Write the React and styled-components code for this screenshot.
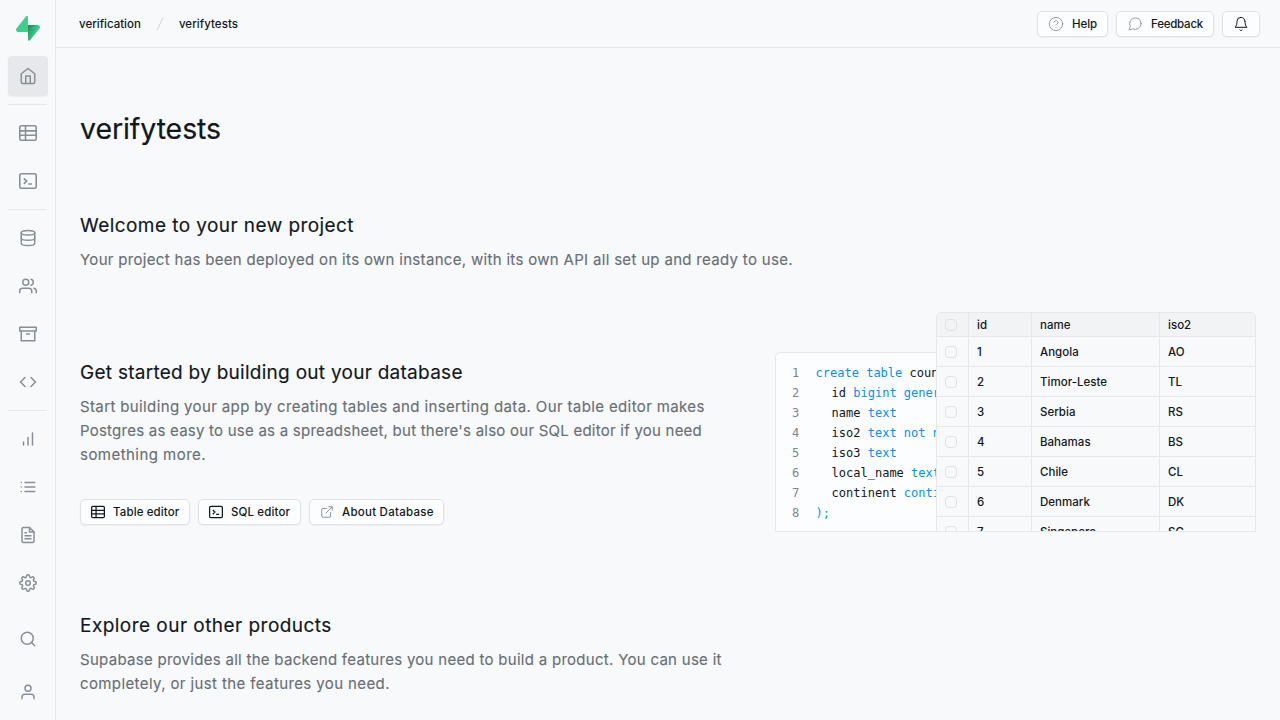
import React from 'react';
import styled, { createGlobalStyle, css } from 'styled-components';
import {
  FiHome, FiDatabase, FiUsers, FiArchive, FiCode, FiBarChart, FiList, FiFileText,
  FiSettings, FiSearch, FiUser, FiHelpCircle, FiMessageCircle, FiBell, FiExternalLink,
} from 'react-icons/fi';

const Global = createGlobalStyle`
  *, *::before, *::after { box-sizing: border-box; }
  body {
    margin: 0;
    background: #f8f9fb;
    color: #11181c;
    font-family: Inter, "Liberation Sans", sans-serif;
    font-weight: 450;
    overflow: hidden;
  }
  h1, h2, p { margin: 0; font-weight: 400; }
  svg { display: block; flex: none; }
`;

const Shell = styled.div`
  display: flex;
  width: 1280px;
  height: 720px;
  overflow: hidden;
`;

const Sidebar = styled.nav`
  width: 56px;
  flex: none;
  display: flex;
  flex-direction: column;
  justify-content: space-between;
  padding: 15px 7px 8px 8px;
  border-right: 1px solid #e6e8eb;
`;

const NavGroup = styled.div`
  display: flex;
  flex-direction: column;
  gap: 8px;
`;

const LogoBox = styled.div`
  display: flex;
  justify-content: center;
  height: 33px;
  padding-top: 0.5px;
`;

const NavItem = styled.a`
  width: 40px;
  height: 40px;
  display: flex;
  align-items: center;
  justify-content: center;
  border-radius: 4px;
  color: #889096;
  margin-top: ${(p) => p.$top || 0}px;
  ${(p) => p.$active && css`
    background: #e6e8eb;
    box-shadow: 0 1px 2px rgba(0, 0, 0, 0.06);
  `}
`;

const Separator = styled.div`
  height: 1px;
  width: 39px;
  background: #e6e8eb;
`;

const Page = styled.div`
  flex: 1;
  min-width: 0;
  display: flex;
  flex-direction: column;
`;

const Header = styled.header`
  height: 48px;
  flex: none;
  display: flex;
  align-items: center;
  justify-content: space-between;
  padding: 0 20px 0 23px;
  border-bottom: 1px solid #e6e8eb;
`;

const Crumbs = styled.div`
  display: flex;
  align-items: center;
  font-size: 11.5px;
  line-height: 16px;
`;

const Slash = styled.svg`
  margin: 0 12px;
`;

const Text = styled.span`
  white-space: nowrap;
  letter-spacing: ${(p) => p.$ls || 0}px;
`;

const Line = styled(Text)`
  display: block;
`;

const Actions = styled.div`
  display: flex;
  gap: 8px;
`;

const Button = styled.button`
  display: flex;
  align-items: center;
  gap: 8px;
  width: ${(p) => p.$w}px;
  height: 26px;
  padding: 0 0 0 10px;
  border: 1px solid #dfe3e6;
  border-radius: 5px;
  background: #fcfdfe;
  box-shadow: 0 1px 2px rgba(0, 0, 0, 0.05);
  color: #11181c;
  font: 450 11.5px/16px Inter, "Liberation Sans", sans-serif;
`;

const Muted = styled.span`
  color: #7e868c;
`;

const Content = styled.main`
  padding: 63px 24px 0;
`;

const Title = styled.h1`
  font-size: 28.5px;
  line-height: 36px;
  margin-bottom: 64px;
  -webkit-text-stroke: 0.2px currentColor;
`;

const Heading = styled.h2`
  padding-top: 1px;
  font-size: 19px;
  line-height: 28px;
  margin-bottom: 8px;
  -webkit-text-stroke: 0.15px currentColor;
`;

const Lead = styled.p`
  font-size: 15px;
  line-height: 24px;
  color: #687076;
  -webkit-text-stroke: 0.15px currentColor;
`;

const Feature = styled.section`
  display: flex;
  justify-content: space-between;
  height: 220px;
  margin: 40px 0 79px;
`;

const FeatureCopy = styled.div`
  padding-top: 46px;

  ${Actions} { margin-top: 32px; }
`;

const Preview = styled.div`
  width: 481px;
  display: flex;
  align-items: flex-end;
`;

const CodeCard = styled.div`
  width: 162px;
  height: 180px;
  flex: none;
  margin-right: -1px;
  padding: 10px 0 0 16px;
  border: 1px solid #e6e8eb;
  border-radius: 5px 0 0 0;
  background: #fcfdfe;
  overflow: hidden;
  font: 400 12px/20px "DejaVu Sans Mono", monospace;
`;

const CodeLine = styled.div`
  display: flex;
  white-space: pre;
`;

const LineNo = styled.span`
  flex: none;
  width: 23.6px;
  color: #7e868c;
`;

const Code = styled.span`
  padding-left: ${(p) => (p.$indent ? 16 : 0)}px;
`;

const Keyword = styled.span`
  color: #0091ff;
`;

const Grid = styled.div`
  position: relative;
  width: 320px;
  height: 220px;
  flex: none;
  border: 1px solid #e6e8eb;
  border-radius: 5px 5px 0 0;
  background: #f8f9fb;
  overflow: hidden;
  font-size: 11.5px;
`;

const Row = styled.div`
  display: grid;
  grid-template-columns: 32px 63px 128px 95px;
  height: ${(p) => (p.$head ? 24 : 30)}px;
  border-bottom: 1px solid #e6e8eb;
  background: ${(p) => (p.$head ? '#f1f3f5' : 'transparent')};
`;

const Cell = styled.div`
  display: flex;
  align-items: center;
  padding-left: 8px;
  border-right: 1px solid #e6e8eb;
  &:last-child { border-right: 0; }
`;

const Check = styled.span`
  width: 12px;
  height: 12px;
  border: 1px solid #dfe3e6;
  border-radius: 4px;
`;

const Logo = () => (
  <svg width="24" height="25" viewBox="0 0 109 113" fill="none">
    <defs>
      <linearGradient id="bolt" x1="53.97" y1="54.97" x2="94.16" y2="71.83" gradientUnits="userSpaceOnUse">
        <stop stopColor="#249361" />
        <stop offset="1" stopColor="#3ECF8E" />
      </linearGradient>
      <linearGradient id="shade" x1="36.16" y1="30.58" x2="54.48" y2="65.08" gradientUnits="userSpaceOnUse">
        <stop />
        <stop offset="1" stopOpacity="0" />
      </linearGradient>
    </defs>
    <path d="M63.7076 110.284C60.8481 113.885 55.0502 111.912 54.9813 107.314L53.9738 40.0627L99.1935 40.0627C107.384 40.0627 111.952 49.5228 106.859 55.9374L63.7076 110.284Z" fill="url(#bolt)" />
    <path d="M63.7076 110.284C60.8481 113.885 55.0502 111.912 54.9813 107.314L53.9738 40.0627L99.1935 40.0627C107.384 40.0627 111.952 49.5228 106.859 55.9374L63.7076 110.284Z" fill="url(#shade)" fillOpacity="0.2" />
    <path d="M45.317 2.07103C48.1765 -1.53037 53.9745 0.442937 54.0434 5.041L54.4849 72.2922H9.83113C1.64038 72.2922 -2.92775 62.8321 2.1655 56.4175L45.317 2.07103Z" fill="#3ECF8E" />
  </svg>
);

const TableIcon = ({ size = 18 }) => (
  <svg width={size} height={size} viewBox="0 0 18 18" fill="none" stroke="currentColor" strokeWidth="1.6">
    <rect x="0.8" y="1.8" width="16.4" height="14.4" rx="1.5" />
    <path d="M1 6.9h16M1 11.3h16M6.5 2v14" />
  </svg>
);

const TerminalIcon = ({ size = 18 }) => (
  <svg width={size} height={size} viewBox="0 0 18 18" fill="none" stroke="currentColor" strokeWidth="1.6">
    <rect x="0.8" y="1.8" width="16.4" height="14.4" rx="1.5" />
    <path d="M4.8 6.4l2.8 2.7-2.8 2.7M9.2 12h3.8" />
  </svg>
);

const nav = [
  [TableIcon, TerminalIcon],
  [FiDatabase, FiUsers, FiArchive, FiCode],
  [FiBarChart, FiList, FiFileText, FiSettings],
];

const code = [
  [['create table', 1], [' coun']],
  [['id '], ['bigint gener', 1]],
  [['name '], ['text', 1]],
  [['iso2 '], ['text not n', 1]],
  [['iso3 '], ['text', 1]],
  [['local_name '], ['text', 1]],
  [['continent '], ['conti', 1]],
  [[');', 1]],
];

const rows = [
  ['1', 'Angola', 'AO'],
  ['2', 'Timor-Leste', 'TL'],
  ['3', 'Serbia', 'RS'],
  ['4', 'Bahamas', 'BS'],
  ['5', 'Chile', 'CL'],
  ['6', 'Denmark', 'DK'],
  ['7', 'Singapore', 'SG'],
];

const GridRow = ({ cells, head }) => (
  <Row $head={head}>
    <Cell><Check /></Cell>
    {cells.map((c) => <Cell key={c}><Text $ls={0.02}>{c}</Text></Cell>)}
  </Row>
);

export default function App() {
  return (
    <Shell>
      <Global />
      <Sidebar>
        <NavGroup>
          <LogoBox><Logo /></LogoBox>
          <NavItem $active><FiHome size={18} /></NavItem>
          {nav.map((group, i) => (
            <React.Fragment key={i}>
              <Separator />
              {group.map((Icon, j) => <NavItem key={j}><Icon size={18} /></NavItem>)}
            </React.Fragment>
          ))}
          <NavItem $top={8}><FiSearch size={18} /></NavItem>
        </NavGroup>
        <NavItem><FiUser size={18} /></NavItem>
      </Sidebar>
      <Page>
        <Header>
          <Crumbs>
            <Text $ls={0}>verification</Text>
            <Slash width="14" height="16" viewBox="0 0 14 16" stroke="#d0d5d9" strokeLinecap="round">
              <path d="M4 14L10 2" />
            </Slash>
            <Text $ls={0.05}>verifytests</Text>
          </Crumbs>
          <Actions>
            <Button $w={71}>
              <Muted><FiHelpCircle size={16} strokeWidth={1.2} /></Muted>
              <Text $ls={-0.08}>Help</Text>
            </Button>
            <Button $w={98}>
              <Muted><FiMessageCircle size={16} strokeWidth={1.2} /></Muted>
              <Text $ls={-0.22}>Feedback</Text>
            </Button>
            <Button $w={38}><FiBell size={16} strokeWidth={1.5} /></Button>
          </Actions>
        </Header>
        <Content>
          <Title><Text $ls={-0.08}>verifytests</Text></Title>
          <Heading><Text $ls={0.43}>Welcome to your new project</Text></Heading>
          <Lead>
            <Text $ls={0.315}>
              Your project has been deployed on its own instance, with its own API all set up and ready to use.
            </Text>
          </Lead>
          <Feature>
            <FeatureCopy>
              <Heading><Text $ls={0.27}>Get started by building out your database</Text></Heading>
              <Lead>
                <Line $ls={0.375}>Start building your app by creating tables and inserting data. Our table editor makes</Line>
                <Line $ls={0.235}>Postgres as easy to use as a spreadsheet, but there's also our SQL editor if you need</Line>
                <Line $ls={0.46}>something more.</Line>
              </Lead>
              <Actions>
                <Button $w={110}><TableIcon size={14} /><Text $ls={0.12}>Table editor</Text></Button>
                <Button $w={103}><TerminalIcon size={14} /><Text $ls={0.13}>SQL editor</Text></Button>
                <Button $w={135}>
                  <Muted><FiExternalLink size={14} strokeWidth={1.5} /></Muted>
                  <Text $ls={0.25}>About Database</Text>
                </Button>
              </Actions>
            </FeatureCopy>
            <Preview>
              <CodeCard>
                {code.map((parts, i) => (
                  <CodeLine key={i}>
                    <LineNo>{i + 1}</LineNo>
                    <Code $indent={i > 0 && i < 7}>
                      {parts.map(([t, kw]) => (kw ? <Keyword key={t}>{t}</Keyword> : t))}
                    </Code>
                  </CodeLine>
                ))}
              </CodeCard>
              <Grid>
                <GridRow head cells={['id', 'name', 'iso2']} />
                {rows.map((r) => <GridRow key={r[0]} cells={r} />)}
              </Grid>
            </Preview>
          </Feature>
          <Heading><Text $ls={0.46}>Explore our other products</Text></Heading>
          <Lead>
            <Line $ls={0.285}>Supabase provides all the backend features you need to build a product. You can use it</Line>
            <Line $ls={0.39}>completely, or just the features you need.</Line>
          </Lead>
        </Content>
      </Page>
    </Shell>
  );
}
